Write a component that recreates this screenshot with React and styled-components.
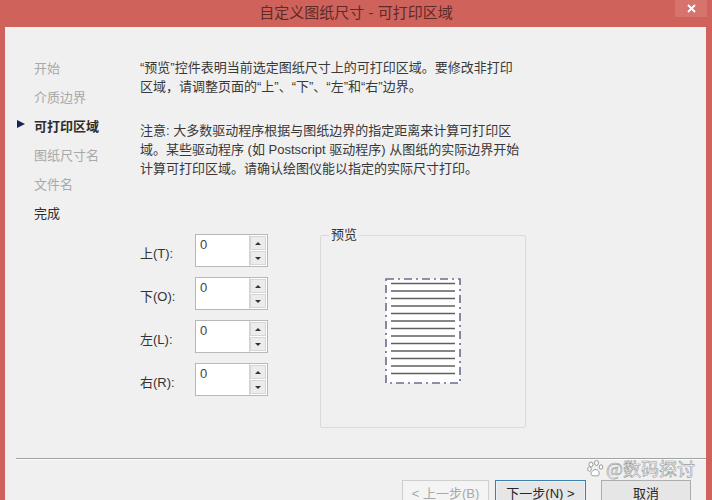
import React from 'react';
import styled, { createGlobalStyle } from 'styled-components';

const GlobalStyle = createGlobalStyle`
  html, body {
    margin: 0;
    padding: 0;
  }
  body {
    width: 712px;
    height: 500px;
    overflow: hidden;
    background: #cf635c;
    font-family: "Liberation Sans", "Noto Sans CJK SC", sans-serif;
  }
`;

const Window = styled.div`
  position: relative;
  width: 712px;
  height: 500px;
  display: flex;
  flex-direction: column;
  background: #cf635c;
  overflow: hidden;
`;

const TitleBar = styled.div`
  height: 27px;
  flex-shrink: 0;
  display: grid;
  grid-template-columns: 1fr auto 1fr;
  align-items: start;
`;

const Title = styled.div`
  grid-column: 2;
  font-size: 15px;
  line-height: 26px;
  color: #5e2b27;
`;

const CloseButton = styled.div`
  grid-column: 3;
  justify-self: end;
  margin-right: 5px;
  width: 32px;
  height: 17px;
  background: #d6736d;
  display: flex;
  align-items: center;
  justify-content: center;
`;

const Frame = styled.div`
  flex: 1;
  margin: 0 6px 0 5px;
  background: #f0f0f0;
  display: flex;
  flex-direction: column;
  min-height: 0;
`;

const Content = styled.div`
  flex: 1;
  display: flex;
`;

const Nav = styled.ul`
  width: 135px;
  flex-shrink: 0;
  margin: 0;
  padding: 26px 0 0 12px;
  box-sizing: border-box;
  list-style: none;
`;

const NavItem = styled.li`
  display: flex;
  align-items: center;
  height: 29px;
  font-size: 13px;
  color: ${p => (p.$state === 'off' ? '#a9a9a9' : '#2e2e2e')};
  font-weight: ${p => (p.$state === 'current' ? 600 : 400)};
`;

const Marker = styled.span`
  width: 17px;
  flex-shrink: 0;
  display: flex;
  align-items: center;
  padding-bottom: 3px;

  &::before {
    content: '';
    display: ${p => (p.$show ? 'block' : 'none')};
    border-left: 8px solid #14225e;
    border-top: 4.5px solid transparent;
    border-bottom: 4.5px solid transparent;
  }
`;

const Main = styled.div`
  flex: 1;
  padding-top: 31px;
  color: #383838;
`;

const Para = styled.p`
  margin: 0 0 ${p => p.$gap || 0}px;
  font-size: 13px;
  line-height: 19px;
  white-space: nowrap;
`;

const Controls = styled.div`
  display: flex;
  align-items: flex-start;
  margin-top: 50px;
`;

const SpinList = styled.div`
  display: flex;
  flex-direction: column;
  gap: 10px;
  margin-top: 6px;
`;

const SpinRow = styled.div`
  display: flex;
  align-items: center;
  height: 33px;
`;

const SpinLabel = styled.label`
  width: 55px;
  font-size: 13px;
  padding-top: 3px;
  color: #333;
`;

const SpinBox = styled.div`
  width: 73px;
  height: 33px;
  box-sizing: border-box;
  border: 1px solid #b8b8b8;
  background: #fff;
  display: flex;
`;

const SpinValue = styled.div`
  flex: 1;
  padding: 2px 4px;
  font-size: 13px;
  line-height: 15px;
  color: #444;
`;

const SpinButtons = styled.div`
  width: 16px;
  display: flex;
  flex-direction: column;
  gap: 1px;
  padding: 1px 1px 1px 0;
  border-left: 1px solid #d4d4d4;
`;

const SpinButton = styled.div`
  flex: 1;
  background: #ececec;
  border: 1px solid #d6d6d6;
  display: flex;
  align-items: center;
  justify-content: center;

  &::after {
    content: '';
    border-left: 3px solid transparent;
    border-right: 3px solid transparent;
    ${p =>
      p.$dir === 'up'
        ? 'border-bottom: 3px solid #333;'
        : 'border-top: 3px solid #333;'}
  }
`;

const PreviewBox = styled.fieldset`
  width: 206px;
  height: 200px;
  box-sizing: border-box;
  margin: 0 0 0 52px;
  padding: 0;
  border: 1px solid #dadada;
  border-radius: 2px;
`;

const Legend = styled.legend`
  margin-left: 8px;
  padding: 0 2px;
  font-size: 13px;
  line-height: 14px;
  color: #333;
`;

const PreviewArea = styled.div`
  display: flex;
  justify-content: center;
  padding-top: 36px;
`;

const Footer = styled.div`
  height: 42px;
  flex-shrink: 0;
  margin-left: 11px;
  border-top: 1px solid #a3a3a3;
  box-shadow: inset 0 1px #fbfbfb;
  display: flex;
  justify-content: flex-end;
  align-items: flex-start;
  padding: 21px 15px 0 0;
  box-sizing: border-box;
`;

const Button = styled.div`
  width: ${p => p.$w}px;
  height: 24px;
  margin-left: ${p => p.$ml}px;
  box-sizing: border-box;
  display: flex;
  align-items: center;
  justify-content: center;
  font-size: 13px;
  color: ${p => (p.$disabled ? '#a8a8a8' : '#262626')};
  background: ${p => (p.$disabled ? '#f4f4f4' : '#e6e6e6')};
  border: 1px solid
    ${p => (p.$primary ? '#3c7fb1' : p.$disabled ? '#cfcfcf' : '#adadad')};
  ${p => p.$primary && 'box-shadow: inset 0 0 0 1px #e9f2f9;'}
`;

const Watermark = styled.div`
  position: absolute;
  left: 587px;
  top: 457px;
  display: flex;
  align-items: center;
  gap: 2px;
  font-size: 18px;
  line-height: 22px;
  color: rgba(255, 255, 255, 0.92);
  -webkit-text-stroke: 0.6px #9a9a9a;
  font-family: "Noto Sans CJK SC", sans-serif;
`;

const Paper = () => {
  const lines = Array.from({ length: 13 }, (_, i) => 5 + i * 7.5);
  return (
    <svg width="76" height="106" viewBox="0 0 76 106">
      <rect x="1" y="1" width="74" height="104" fill="#fff" />
      {lines.map(y => (
        <line key={y} x1="6" x2="70" y1={y + 0.5} y2={y + 0.5} stroke="#5f5f5f" strokeWidth="1.4" />
      ))}
      <rect
        x="1"
        y="1"
        width="74"
        height="104"
        fill="none"
        stroke="#6a6d8e"
        strokeWidth="1.6"
        strokeDasharray="8 4 2 4"
      />
    </svg>
  );
};

const Paw = () => (
  <svg width="17" height="17" viewBox="0 0 17 17">
    <g fill="#fff" stroke="#9a9a9a" strokeWidth="1">
      <ellipse cx="4" cy="4.5" rx="2" ry="2.5" />
      <ellipse cx="9.5" cy="3" rx="2" ry="2.5" />
      <ellipse cx="2.5" cy="9" rx="1.8" ry="2.2" />
      <ellipse cx="14" cy="7" rx="1.8" ry="2.2" />
      <path d="M5 15.5 C3 15 4 11 8 9.5 C12 9 13 14 11.5 15.5 C10 16.2 7 15.8 5 15.5 Z" />
    </g>
  </svg>
);

const navItems = [
  { label: '开始', state: 'off' },
  { label: '介质边界', state: 'off' },
  { label: '可打印区域', state: 'current' },
  { label: '图纸尺寸名', state: 'off' },
  { label: '文件名', state: 'off' },
  { label: '完成', state: 'on' },
];

const margins = ['上(T):', '下(O):', '左(L):', '右(R):'];

export default function App() {
  return (
    <>
      <GlobalStyle />
      <Window>
        <TitleBar>
          <Title>自定义图纸尺寸 - 可打印区域</Title>
          <CloseButton>
            <svg width="9" height="9" viewBox="0 0 9 9">
              <path d="M1 1 L8 8 M8 1 L1 8" stroke="#fff" strokeWidth="1.8" />
            </svg>
          </CloseButton>
        </TitleBar>
        <Frame>
          <Content>
            <Nav>
              {navItems.map(item => (
                <NavItem key={item.label} $state={item.state}>
                  <Marker $show={item.state === 'current'} />
                  {item.label}
                </NavItem>
              ))}
            </Nav>
            <Main>
              <Para>“预览”控件表明当前选定图纸尺寸上的可打印区域。要修改非打印</Para>
              <Para $gap={25}>区域，请调整页面的“上”、“下”、“左”和“右”边界。</Para>
              <Para>注意: 大多数驱动程序根据与图纸边界的指定距离来计算可打印区</Para>
              <Para>域。某些驱动程序 (如 Postscript 驱动程序) 从图纸的实际边界开始</Para>
              <Para>计算可打印区域。请确认绘图仪能以指定的实际尺寸打印。</Para>
              <Controls>
                <SpinList>
                  {margins.map(m => (
                    <SpinRow key={m}>
                      <SpinLabel>{m}</SpinLabel>
                      <SpinBox>
                        <SpinValue>0</SpinValue>
                        <SpinButtons>
                          <SpinButton $dir="up" />
                          <SpinButton $dir="down" />
                        </SpinButtons>
                      </SpinBox>
                    </SpinRow>
                  ))}
                </SpinList>
                <PreviewBox>
                  <Legend>预览</Legend>
                  <PreviewArea>
                    <Paper />
                  </PreviewArea>
                </PreviewBox>
              </Controls>
            </Main>
          </Content>
          <Footer>
            <Button $w={87} $ml={0} $disabled>&lt; 上一步(B)</Button>
            <Button $w={91} $ml={6} $primary>下一步(N) &gt;</Button>
            <Button $w={90} $ml={15}>取消</Button>
          </Footer>
        </Frame>
        <Watermark>
          <Paw />
          <span>@数码探讨</span>
        </Watermark>
      </Window>
    </>
  );
}
